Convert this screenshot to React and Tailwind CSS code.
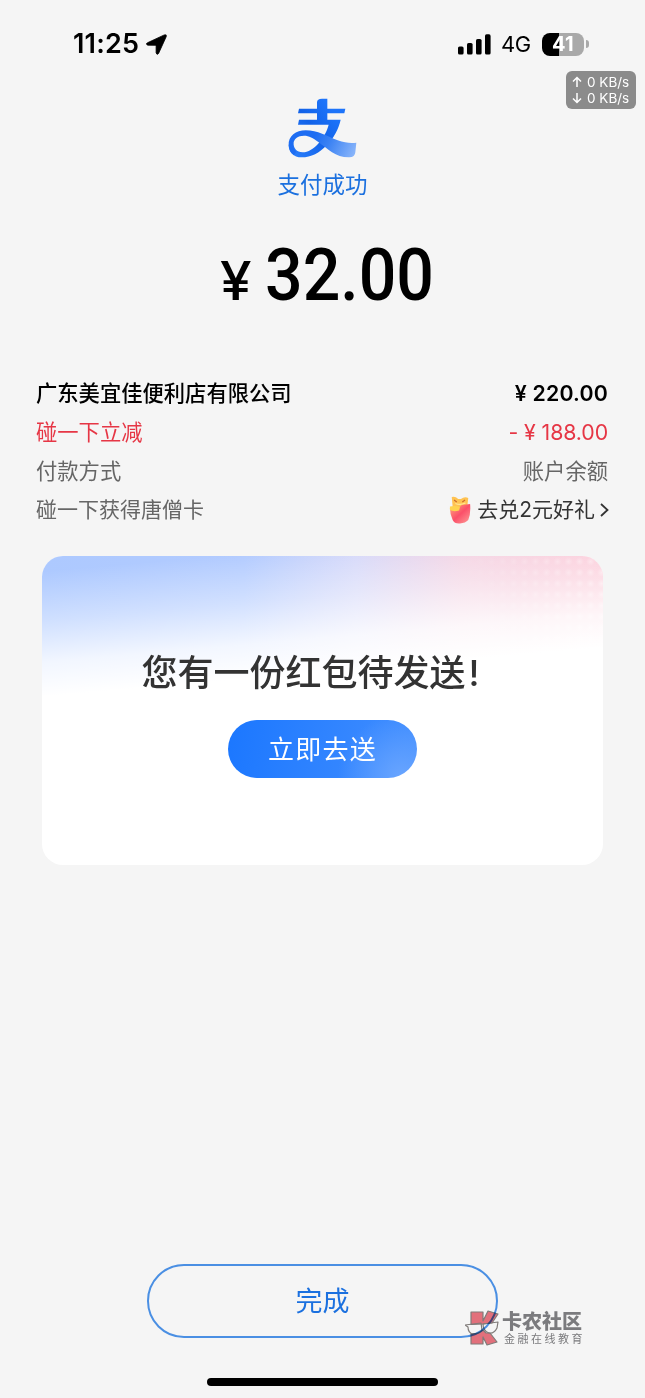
import React from "react";

function StatusBar() {
  return (
    <div className="flex h-[88px] items-start justify-between pl-[73px] pr-[56px] pt-[28px] text-black">
      <div className="flex h-8 items-center gap-[6px]">
        <span className="w-[67px] whitespace-nowrap text-[27px] font-semibold leading-8 tracking-[0.2px]">11:25</span>
        <svg className="h-[21px] w-[21px]" viewBox="0 0 21 21">
          <path
            d="M1.4 8.8 18.3.9Q21 .1 20.2 2.7L12.6 19.4Q10.8 21.6 10.1 18.8V12.2Q10 11.3 9.2 11.3L1.8 11.2Q-.8 10.2 1.4 8.8Z"
            fill="currentColor"
            stroke="currentColor"
            strokeWidth="0.8"
            strokeLinejoin="round"
          />
        </svg>
      </div>
      <div className="flex h-8 items-center">
        <svg className="h-[21px] w-[33px]" viewBox="0 0 33 21">
          <rect x="0" y="12.5" width="5.6" height="8" rx="1.6" />
          <rect x="9" y="9" width="5.6" height="11.5" rx="1.6" />
          <rect x="18" y="5" width="5.6" height="15.5" rx="1.6" />
          <rect x="27" y="0.3" width="5.6" height="20.2" rx="1.6" />
        </svg>
        <span className="ml-[10px] w-[31px] text-[22px] leading-8 tracking-[-0.4px]">4G</span>
        <div className="ml-[10px] flex h-[23px] w-[42px] items-center justify-center rounded-[8px] bg-[linear-gradient(90deg,#000_41%,#a9a9a9_41%)] text-[20px] font-bold leading-none tracking-[0.4px] text-white">
          41
        </div>
        <div className="ml-[2px] h-[8px] w-[3px] rounded-r-full bg-[#a9a9a9]" />
      </div>
    </div>
  );
}

function NetSpeed() {
  return (
    <div className="absolute left-[566px] top-[71px] flex h-[38px] w-[70px] flex-col justify-center rounded-[6px] bg-[#8b8b8b] pl-[6px] text-white">
      {["M5 11V1.5M1 5.5l4-4 4 4", "M5 1v9.5M1 6.5l4 4 4-4"].map((d) => (
        <div key={d} className="flex h-4 items-center gap-[5px]">
          <svg className="h-3 w-[10px]" viewBox="0 0 10 12" fill="none" stroke="currentColor" strokeWidth="1.5">
            <path d={d} />
          </svg>
          <span className="whitespace-nowrap text-[13.5px] leading-4">0 KB/s</span>
        </div>
      ))}
    </div>
  );
}

function PayLogo() {
  return (
    <svg className="h-[60px] w-[70px]" viewBox="68 22 210 180">
      <defs>
        <linearGradient id="tail" x1="150" y1="130" x2="275" y2="190" gradientUnits="userSpaceOnUse">
          <stop offset="0" stopColor="#1e6df2" />
          <stop offset="0.35" stopColor="#3b82f3" />
          <stop offset="1" stopColor="#8fb9fb" />
        </linearGradient>
        <linearGradient id="stroke" x1="225" y1="90" x2="90" y2="195" gradientUnits="userSpaceOnUse">
          <stop offset="0" stopColor="#1d74fa" />
          <stop offset="0.45" stopColor="#1262e8" />
          <stop offset="1" stopColor="#287cfa" />
        </linearGradient>
      </defs>
      <path
        d="M101 54H155V35Q155 24 170 24H186V54H240L237 68H186V87H226C220 116 204 143 185 163C162 187 138 200 109 200C84 200 70 184 70 162L84 155C84 173 94 185 112 185C145 185 181 139 190 102H98L101 87H155V68H98Z"
        fill="url(#stroke)"
      />
      <path
        d="M70 164C68 136 92 119 121 119C157 119 185 137 217 149C239 157 257 158 273 156L270 185Q269 200 252 200C212 201 187 174 158 153C143 142 132 135 116 135C98 135 84 144 84 163C84 171 87 178 93 183L86 194C75 187 71 177 70 164Z"
        fill="url(#tail)"
      />
    </svg>
  );
}

function GiftIcon() {
  return (
    <svg className="h-[28px] w-[22px]" viewBox="0 0 24 28" preserveAspectRatio="none">
      <defs>
        <linearGradient id="bag" x1="3" y1="8" x2="19" y2="27" gradientUnits="userSpaceOnUse">
          <stop offset="0" stopColor="#ffa77e" />
          <stop offset="0.55" stopColor="#fb4f69" />
          <stop offset="1" stopColor="#fd8c8d" />
        </linearGradient>
      </defs>
      <path d="M3 1Q7 0 10 3L13 3Q17 0 21 2L20 10Q13 13 4 11Z" fill="#ffc352" />
      <path d="M1 12Q10 13 14 9L23 8Q24 17 21 24Q18 27 12 27.5Q6 28 4 24Q1 18 1 12Z" fill="url(#bag)" />
      <path d="M1 10.5Q7 9.5 12 11L11 14.5Q5 16 1 14Z" fill="#ffd34f" />
      <path d="M5.5 4l3 2M17.5 4l-3 2" stroke="#c9692e" strokeWidth="1.2" />
      <path d="M7 7.5Q12 9.5 18 7" stroke="#ffe798" strokeWidth="1.3" fill="none" />
    </svg>
  );
}

function Row({ label, labelClass, children }) {
  return (
    <div className="flex h-[39px] items-center justify-between">
      <span className={labelClass}>{label}</span>
      {children}
    </div>
  );
}

function Watermark() {
  return (
    <div className="absolute left-[465px] top-[1309px] flex mix-blend-multiply">
      <svg className="h-[38px] w-[34px]" viewBox="0 0 34 38" stroke="#85807e" strokeWidth="1.2" strokeLinejoin="round">
        <path d="M6 3H18V12L23 2 33 5 27 14 18 15 6 15.5Z" fill="#ec7480" />
        <path d="M6 25 14 24 18 21 21 24 25 24 32 33 22 36 18 28V35H6Z" fill="#ec7480" />
        <path d="M0 16 16 14 17 21Q14 25 8 25Q3 24 3 18Z" fill="none" />
        <path d="M18 15 33 13 32 19Q29 25 24 24Q18 22 18 15Z" fill="none" />
      </svg>
      <div className="ml-[3px] mt-[2px] whitespace-nowrap text-[#808083]">
        <div className="text-[20px] font-black leading-[22px]">卡农社区</div>
        <div className="ml-[2px] text-[11px] leading-[12px] tracking-[2.5px]">金融在线教育</div>
      </div>
    </div>
  );
}

export default function App() {
  return (
    <div className="relative flex h-[1398px] w-[645px] flex-col overflow-hidden bg-[#f5f5f5] font-['Inter','Noto_Sans_CJK_SC',sans-serif]">
      <StatusBar />
      <NetSpeed />

      <div className="flex flex-col items-center pt-[10px]">
        <PayLogo />
        <div className="mt-[11px] text-[22.5px] leading-8 text-[#1b70df]">支付成功</div>
      </div>

      <div className="mt-[35px] flex h-[80px] items-baseline pl-[220px] font-medium text-black">
        <span className="w-[45px] origin-left scale-x-[1.07] text-[53px] leading-[80px]">¥</span>
        <span className="origin-left scale-x-[0.92] font-['Roboto',sans-serif] text-[72px] leading-[80px]">32.00</span>
      </div>

      <div className="mt-[57px] flex flex-col px-[36px] text-[21.3px] leading-8 text-[#666]">
        <Row label="广东美宜佳便利店有限公司" labelClass="font-medium text-black">
          <span className="mr-px font-semibold tracking-[0.2px] text-black">¥ 220.00</span>
        </Row>
        <Row label="碰一下立减" labelClass="text-[#e63645]">
          <span className="mr-px tracking-[-0.1px] text-[#e63645]">- ¥ 188.00</span>
        </Row>
        <Row label="付款方式">
          <span className="mr-px">账户余额</span>
        </Row>
        <Row label="碰一下获得唐僧卡" labelClass="text-[21px]">
          <div className="flex items-center text-[#333]">
            <GiftIcon />
            <span className="ml-[6px] text-[21px]">去兑2元好礼</span>
            <svg className="ml-[5px] h-[14px] w-[9px]" viewBox="0 0 9 14" fill="none" stroke="currentColor" strokeWidth="1.8">
              <path d="M1 1l6.5 6L1 13" />
            </svg>
          </div>
        </Row>
      </div>

      <div className="relative mx-[42px] mt-[27px] flex h-[309px] flex-col items-center overflow-hidden rounded-[21px] bg-white pt-[93px]">
        <div className="absolute inset-x-0 top-0 h-[140px] bg-[linear-gradient(90deg,#adc9ff_0%,#b2cbff_36%,#d4d7f9_56%,#f3d0e1_75%,#fbc2d2_100%)]" />
        <div className="absolute right-0 top-0 h-[100px] w-[150px] bg-[radial-gradient(circle,rgba(255,255,255,0.4)_0,rgba(255,255,255,0)_4.5px)] bg-[size:11px_11px] [mask-image:linear-gradient(90deg,transparent,black)]" />
        <div className="absolute inset-x-0 top-0 h-[141px] bg-[linear-gradient(175deg,rgba(255,255,255,0)_8%,rgba(255,255,255,0.42)_34%,rgba(255,255,255,0.84)_56%,#fff_74%)]" />
        <div className="relative mr-[1px] w-[361px] whitespace-nowrap text-[36px] font-medium leading-[48px] text-[#333]">
          您有一份红包待发送<span className="ml-[3px]">!</span>
        </div>
        <button className="relative mt-[23px] h-[58px] w-[189px] rounded-full bg-[radial-gradient(circle_at_92%_100%,#69a5ff_0%,rgba(105,165,255,0)_35%),linear-gradient(100deg,#1b77ff,#438fff)] pt-[1px] text-[26px] tracking-[1.3px] text-white">
          立即去送
        </button>
      </div>

      <button className="mt-[399px] h-[74px] w-[351px] self-center rounded-full border-2 border-[#4a8fe3] pt-[3px] text-[27px] text-[#1b70df]">
        完成
      </button>
      <Watermark />
      <div className="mt-[40px] h-2 w-[231px] shrink-0 self-center rounded-full bg-black" />
    </div>
  );
}
